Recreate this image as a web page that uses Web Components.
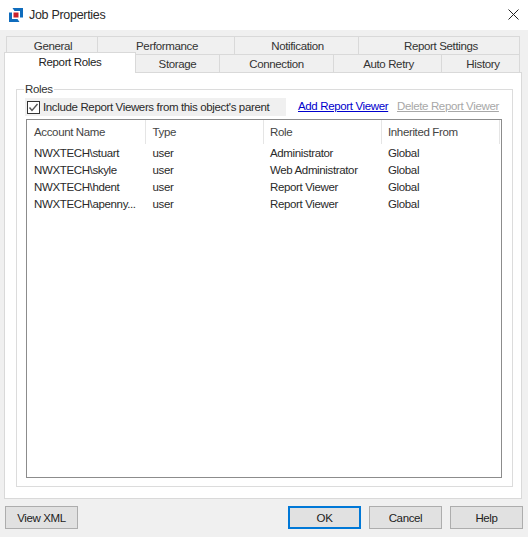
<!DOCTYPE html>
<html>
<head>
<meta charset="utf-8">
<title>Job Properties</title>
<style>
  html, body { margin: 0; padding: 0; background: #f0f0f0; }
  body { font: 11.5px "Liberation Sans", Arial, sans-serif; letter-spacing: -0.36px; color: #1a1a1a; }
</style>
</head>
<body>
<job-dialog></job-dialog>

<script>
class TitleBar extends HTMLElement {
  constructor () {
    super()
    this.shadowDOM = this.attachShadow({ mode: 'open' })
  }

  connectedCallback () {
    this.shadowDOM.innerHTML = `
      <style>
        :host { display: flex; align-items: center; height: 30px; background: #fff; padding-left: 9px; box-sizing: border-box; }
        svg { display: block; }
        .icon { margin-right: 6px; margin-top: -1px; }
        .text { flex: 1; font-size: 12.5px; letter-spacing: -0.3px; color: #2a2a2a; }
        .close { margin-right: 9px; margin-top: -1px; }
      </style>
      <svg class="icon" width="14" height="14" viewBox="0 0 14 14">
        <path d="M3.5 0H14V9.5H11V3H5.5Z" fill="#0f6cbd"/>
        <path d="M0 4.5H3V11H8.5L10.5 14H0Z" fill="#0f6cbd"/>
        <rect x="4.5" y="4.5" width="5" height="5" fill="#c8202c"/>
      </svg>
      <span class="text"><slot></slot></span>
      <svg class="close" width="11" height="11" viewBox="0 0 11 11">
        <path d="M.5 .5L10.5 10.5M10.5 .5L.5 10.5" stroke="#222" stroke-width="1" fill="none"/>
      </svg>
    `
  }
}

class TabItem extends HTMLElement {
  constructor () {
    super()
    this.shadowDOM = this.attachShadow({ mode: 'open' })
  }

  connectedCallback () {
    this.shadowDOM.innerHTML = `
      <style>
        :host {
          display: flex; align-items: center; justify-content: center; box-sizing: border-box;
          height: 18px; background: #f0f0f0; color: #333;
          border: 1px solid #d9d9d9; border-bottom: none; border-left: none;
        }
        :host([first]) { border-left: 1px solid #d9d9d9; }
        :host([active]) {
          margin-top: -2px; background: #fff; color: #222; padding-bottom: 3px;
          border: 1px solid #d9d9d9; border-bottom: none; margin-bottom: -1px; height: 21px; z-index: 1;
        }
      </style>
      <slot></slot>
    `
  }
}

class TabRow extends HTMLElement {
  constructor () {
    super()
    this.shadowDOM = this.attachShadow({ mode: 'open' })
  }

  connectedCallback () {
    this.shadowDOM.innerHTML = `
      <style>
        :host { display: flex; align-items: flex-start; height: 18px; }
      </style>
      <slot></slot>
    `
  }
}

class GroupBox extends HTMLElement {
  constructor () {
    super()
    this.shadowDOM = this.attachShadow({ mode: 'open' })
  }

  connectedCallback () {
    this.shadowDOM.innerHTML = `
      <style>
        :host { display: block; box-sizing: border-box; height: 398px; border: 1px solid #dcdcdc; padding: 0 10px 8px 9px; }
        .legend { display: block; width: max-content; margin: -8px 0 1px -2px; padding: 0 1px; background: #fff; height: 14px; line-height: 14px; color: #333; }
      </style>
      <span class="legend">${this.getAttribute('label')}</span>
      <slot></slot>
    `
  }
}

class ListView extends HTMLElement {
  constructor () {
    super()
    this.shadowDOM = this.attachShadow({ mode: 'open' })
  }

  connectedCallback () {
    const rows = [
      ['NWXTECH\\stuart', 'user', 'Administrator', 'Global'],
      ['NWXTECH\\skyle', 'user', 'Web Administrator', 'Global'],
      ['NWXTECH\\hdent', 'user', 'Report Viewer', 'Global'],
      ['NWXTECH\\apenny...', 'user', 'Report Viewer', 'Global']
    ]
    const heads = ['Account Name', 'Type', 'Role', 'Inherited From']
    this.shadowDOM.innerHTML = `
      <style>
        :host { display: block; box-sizing: border-box; height: 359px; border: 1px solid #8c8c8c; background: #fff; }
        .grid { display: grid; grid-template-columns: 119px 118px 118px 118px; }
        .head { height: 24px; line-height: 24px; padding-left: 7px; border-right: 1px solid #e5e5e5; color: #444; box-sizing: border-box; margin-bottom: 1px; }
        .cell { height: 17px; line-height: 17px; padding-left: 7px; color: #2a2a2a; white-space: nowrap; }
        .head:nth-child(4n+2), .cell:nth-child(4n+2) { padding-left: 6.5px; }
        .head:nth-child(4n+3), .cell:nth-child(4n+3),
        .head:nth-child(4n), .cell:nth-child(4n) { padding-left: 6px; }
      </style>
      <div class="grid">
        ${heads.map(h => `<div class="head">${h}</div>`).join('')}
        ${rows.map(r => r.map(c => `<div class="cell">${c}</div>`).join('')).join('')}
      </div>
    `
  }
}

class WinButton extends HTMLElement {
  constructor () {
    super()
    this.shadowDOM = this.attachShadow({ mode: 'open' })
  }

  connectedCallback () {
    this.shadowDOM.innerHTML = `
      <style>
        :host {
          display: flex; align-items: center; justify-content: center; box-sizing: border-box;
          width: 73px; height: 23px; background: #e1e1e1; border: 1px solid #adadad; color: #222;
        }
        :host([primary]) { border: 2px solid #0078d7; }
      </style>
      <slot></slot>
    `
  }
}

class JobDialog extends HTMLElement {
  constructor () {
    super()
    this.shadowDOM = this.attachShadow({ mode: 'open' })
  }

  connectedCallback () {
    this.shadowDOM.innerHTML = `
      <style>
        :host { display: block; width: 528px; height: 537px; background: #f0f0f0; overflow: hidden; }
        .tabs { padding: 6px 0 0 6px; }
        .panel { box-sizing: border-box; width: 518px; height: 427px; margin: 0 0 0 -2px; background: #fff; border: 1px solid #d9d9d9; padding: 16px 8px 0 11px; }
        .opts { display: flex; align-items: center; height: 18px; margin: 2px 0 3px -1px; white-space: nowrap; }
        .check { display: flex; align-items: center; box-sizing: border-box; flex: none; width: 261px; height: 18px; background: #f0f0f0; padding-left: 2px; color: #2a2a2a; margin-right: 12px; }
        .box { box-sizing: border-box; width: 13px; height: 13px; margin-right: 3px; background: #fff; border: 1px solid #333; display: block; flex: none; }
        .add { flex: none; width: 99px; color: #0000cc; text-decoration: underline; margin-top: -3px; }
        .del { color: #a8a8a8; text-decoration: underline; margin-top: -3px; }
        .foot { display: flex; padding: 7px 5px 0 5px; }
        .spacer { flex: 1; }
        .foot win-button + win-button { margin-left: 8px; }
      </style>
      <title-bar>Job Properties</title-bar>
      <div class="tabs">
        <tab-row>
          <tab-item first style="width:92px;padding-left:2px">General</tab-item>
          <tab-item style="width:137px;padding-left:2px">Performance</tab-item>
          <tab-item style="width:124px;padding-left:2px">Notification</tab-item>
          <tab-item style="width:161px;padding-left:4px">Report Settings</tab-item>
        </tab-row>
        <tab-row style="margin-left:-2px">
          <tab-item active first style="width:132px">Report Roles</tab-item>
          <tab-item style="width:84px">Storage</tab-item>
          <tab-item style="width:114px">Connection</tab-item>
          <tab-item style="width:108px;padding-left:2px">Auto Retry</tab-item>
          <tab-item style="width:78px;padding-left:5px">History</tab-item>
        </tab-row>
        <div class="panel">
          <group-box label="Roles">
            <div class="opts">
              <span class="check">
                <svg class="box" viewBox="0 0 11 11"><path d="M1.5 5.5L4 8.5L9.5 2" stroke="#555" stroke-width="1.4" fill="none"/></svg>
                <span>Include Report Viewers from this object's parent</span>
              </span>
              <span class="add">Add Report Viewer</span>
              <span class="del">Delete Report Viewer</span>
            </div>
            <list-view></list-view>
          </group-box>
        </div>
      </div>
      <div class="foot">
        <win-button>View XML</win-button>
        <span class="spacer"></span>
        <win-button primary>OK</win-button>
        <win-button>Cancel</win-button>
        <win-button>Help</win-button>
      </div>
    `
  }
}

customElements.define('title-bar', TitleBar)
customElements.define('tab-item', TabItem)
customElements.define('tab-row', TabRow)
customElements.define('group-box', GroupBox)
customElements.define('list-view', ListView)
customElements.define('win-button', WinButton)
customElements.define('job-dialog', JobDialog)
</script>
</body>
</html>
